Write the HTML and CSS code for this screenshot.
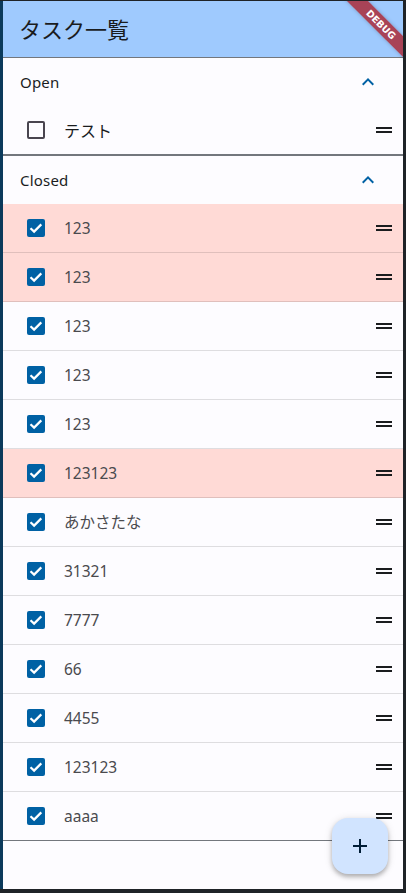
FILE: index.html
```html
<!DOCTYPE html>
<html lang="ja">
<head>
<meta charset="utf-8">
<title>タスク一覧</title>
<link rel="stylesheet" href="styles.css">
</head>
<body>
<div class="app">
  <header class="appbar">
    <h1 class="title">タスク一覧</h1>
  </header>
  <div class="banner"><span>DEBUG</span></div>

  <section class="group">
    <div class="group-head">
      <span class="group-label">Open</span>
      <svg class="chev" viewBox="0 0 24 24" width="24" height="24"><path d="M7.41 15.41L12 10.83l4.59 4.58L18 14l-6-6-6 6z"/></svg>
    </div>
    <ul class="list">
      <li class="row">
        <span class="box"></span>
        <span class="label open-label">テスト</span>
        <svg class="handle" viewBox="0 0 24 24" width="24" height="24"><path d="M20 9H4v2h16V9zM4 15h16v-2H4v2z"/></svg>
      </li>
    </ul>
  </section>

  <section class="group">
    <div class="group-head">
      <span class="group-label">Closed</span>
      <svg class="chev" viewBox="0 0 24 24" width="24" height="24"><path d="M7.41 15.41L12 10.83l4.59 4.58L18 14l-6-6-6 6z"/></svg>
    </div>
    <ul class="list">
      <li class="row sep pink"><span class="box checked"><svg viewBox="0 0 18 18" width="18" height="18"><path d="M3.5 9.2l3.6 3.4 7.2-7.2"/></svg></span><span class="label">123</span><svg class="handle" viewBox="0 0 24 24" width="24" height="24"><path d="M20 9H4v2h16V9zM4 15h16v-2H4v2z"/></svg></li>
      <li class="row sep pink"><span class="box checked"><svg viewBox="0 0 18 18" width="18" height="18"><path d="M3.5 9.2l3.6 3.4 7.2-7.2"/></svg></span><span class="label">123</span><svg class="handle" viewBox="0 0 24 24" width="24" height="24"><path d="M20 9H4v2h16V9zM4 15h16v-2H4v2z"/></svg></li>
      <li class="row sep"><span class="box checked"><svg viewBox="0 0 18 18" width="18" height="18"><path d="M3.5 9.2l3.6 3.4 7.2-7.2"/></svg></span><span class="label">123</span><svg class="handle" viewBox="0 0 24 24" width="24" height="24"><path d="M20 9H4v2h16V9zM4 15h16v-2H4v2z"/></svg></li>
      <li class="row sep"><span class="box checked"><svg viewBox="0 0 18 18" width="18" height="18"><path d="M3.5 9.2l3.6 3.4 7.2-7.2"/></svg></span><span class="label">123</span><svg class="handle" viewBox="0 0 24 24" width="24" height="24"><path d="M20 9H4v2h16V9zM4 15h16v-2H4v2z"/></svg></li>
      <li class="row sep"><span class="box checked"><svg viewBox="0 0 18 18" width="18" height="18"><path d="M3.5 9.2l3.6 3.4 7.2-7.2"/></svg></span><span class="label">123</span><svg class="handle" viewBox="0 0 24 24" width="24" height="24"><path d="M20 9H4v2h16V9zM4 15h16v-2H4v2z"/></svg></li>
      <li class="row sep pink"><span class="box checked"><svg viewBox="0 0 18 18" width="18" height="18"><path d="M3.5 9.2l3.6 3.4 7.2-7.2"/></svg></span><span class="label">123123</span><svg class="handle" viewBox="0 0 24 24" width="24" height="24"><path d="M20 9H4v2h16V9zM4 15h16v-2H4v2z"/></svg></li>
      <li class="row sep"><span class="box checked"><svg viewBox="0 0 18 18" width="18" height="18"><path d="M3.5 9.2l3.6 3.4 7.2-7.2"/></svg></span><span class="label">あかさたな</span><svg class="handle" viewBox="0 0 24 24" width="24" height="24"><path d="M20 9H4v2h16V9zM4 15h16v-2H4v2z"/></svg></li>
      <li class="row sep"><span class="box checked"><svg viewBox="0 0 18 18" width="18" height="18"><path d="M3.5 9.2l3.6 3.4 7.2-7.2"/></svg></span><span class="label">31321</span><svg class="handle" viewBox="0 0 24 24" width="24" height="24"><path d="M20 9H4v2h16V9zM4 15h16v-2H4v2z"/></svg></li>
      <li class="row sep"><span class="box checked"><svg viewBox="0 0 18 18" width="18" height="18"><path d="M3.5 9.2l3.6 3.4 7.2-7.2"/></svg></span><span class="label">7777</span><svg class="handle" viewBox="0 0 24 24" width="24" height="24"><path d="M20 9H4v2h16V9zM4 15h16v-2H4v2z"/></svg></li>
      <li class="row sep"><span class="box checked"><svg viewBox="0 0 18 18" width="18" height="18"><path d="M3.5 9.2l3.6 3.4 7.2-7.2"/></svg></span><span class="label">66</span><svg class="handle" viewBox="0 0 24 24" width="24" height="24"><path d="M20 9H4v2h16V9zM4 15h16v-2H4v2z"/></svg></li>
      <li class="row sep"><span class="box checked"><svg viewBox="0 0 18 18" width="18" height="18"><path d="M3.5 9.2l3.6 3.4 7.2-7.2"/></svg></span><span class="label">4455</span><svg class="handle" viewBox="0 0 24 24" width="24" height="24"><path d="M20 9H4v2h16V9zM4 15h16v-2H4v2z"/></svg></li>
      <li class="row sep"><span class="box checked"><svg viewBox="0 0 18 18" width="18" height="18"><path d="M3.5 9.2l3.6 3.4 7.2-7.2"/></svg></span><span class="label">123123</span><svg class="handle" viewBox="0 0 24 24" width="24" height="24"><path d="M20 9H4v2h16V9zM4 15h16v-2H4v2z"/></svg></li>
      <li class="row"><span class="box checked"><svg viewBox="0 0 18 18" width="18" height="18"><path d="M3.5 9.2l3.6 3.4 7.2-7.2"/></svg></span><span class="label">aaaa</span><svg class="handle" viewBox="0 0 24 24" width="24" height="24"><path d="M20 9H4v2h16V9zM4 15h16v-2H4v2z"/></svg></li>
    </ul>
  </section>

  <button class="fab" type="button" aria-label="追加">
    <svg viewBox="0 0 14 14" width="14" height="14"><path d="M7 0v14M0 7h14"/></svg>
  </button>
</div>
</body>
</html>
```

FILE: styles.css
```css
* { box-sizing: border-box; }

html, body {
  margin: 0;
  padding: 0;
  height: 100%;
}

body {
  background: #1f2327;
  padding: 1px 3px 4px 0;
  font-family: "Noto Sans", "Noto Sans CJK JP", sans-serif;
}

.app {
  position: relative;
  overflow: hidden;
  height: 888px;
  background: #fdfcff;
  border-left: 3px solid #0b3a5b;
  display: flex;
  flex-direction: column;
}

.appbar {
  height: 56px;
  flex: 0 0 56px;
  background: #9fcafe;
  display: flex;
  align-items: center;
  padding: 0 16px;
}

.title {
  margin: -2px 0 0;
  font-family: "Noto Sans CJK JP", sans-serif;
  font-weight: 400;
  font-size: 22px;
  color: #1a1c1e;
  letter-spacing: 0;
  line-height: 1;
}

.banner {
  position: absolute;
  left: 328px;
  top: 15.5px;
  width: 100px;
  height: 15px;
  background: rgba(170, 30, 40, 0.78);
  box-shadow: 0 0 4px rgba(0, 0, 0, 0.25);
  transform: rotate(45deg);
  display: flex;
  align-items: center;
  justify-content: center;
}

.banner span {
  color: #fff;
  font-family: "DejaVu Sans", sans-serif;
  font-weight: 700;
  font-size: 9.5px;
  line-height: 1;
}

.group {
  border-top: 1px solid #73777d;
  border-bottom: 1px solid #73777d;
}

.group-head {
  height: 48px;
  display: flex;
  align-items: center;
  justify-content: space-between;
  padding: 0 23px 0 17px;
}

.group-label {
  font-size: 15px;
  color: #1a1c1e;
  letter-spacing: 0.2px;
}

.chev {
  fill: #0061a4;
  display: block;
}

.list {
  list-style: none;
  margin: 0;
  padding: 0;
}

.row {
  height: 48px;
  display: flex;
  align-items: center;
  padding: 0 7px 0 24px;
}

.row.sep {
  height: 49px;
  border-bottom: 1px solid rgba(0, 0, 0, 0.12);
}

.row.pink {
  background: #ffdad6;
}

.box {
  width: 18px;
  height: 18px;
  flex: 0 0 18px;
  border: 2px solid #49454f;
  border-radius: 2px;
  display: flex;
  align-items: center;
  justify-content: center;
}

.box.checked {
  border: none;
  background: #0061a4;
}

.box svg {
  display: block;
  fill: none;
  stroke: #ffffff;
  stroke-width: 2.2;
}

.label {
  flex: 1;
  margin: 2px 0 0 19px;
  font-size: 15.5px;
  color: #4a4a4e;
  line-height: 1;
}

.open-label {
  color: #1a1c1e;
  font-size: 16px;
}

.handle {
  display: block;
  fill: #1a1c1e;
  flex: 0 0 24px;
}

.fab {
  position: absolute;
  right: 15px;
  bottom: 15px;
  width: 56px;
  height: 56px;
  border: none;
  border-radius: 16px;
  background: #d1e4ff;
  box-shadow: 0 3px 4px rgba(0, 0, 0, 0.25), 0 1px 8px rgba(0, 0, 0, 0.12);
  display: flex;
  align-items: center;
  justify-content: center;
  padding: 0;
}

.fab svg {
  display: block;
  fill: none;
  stroke: #001d36;
  stroke-width: 2;
}
```
